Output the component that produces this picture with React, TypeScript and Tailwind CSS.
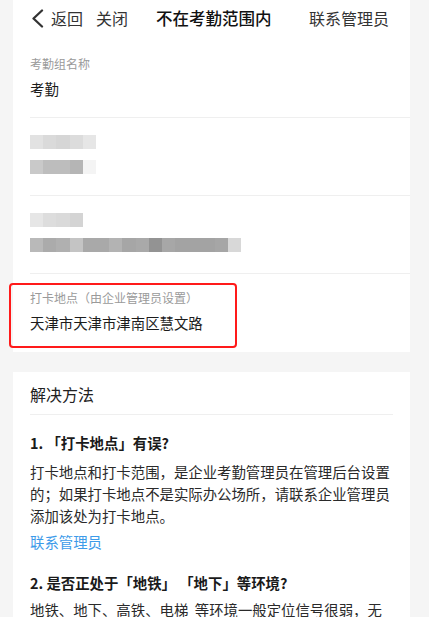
const FONT = { fontFamily: '"Noto Sans CJK SC", "Noto Sans", sans-serif' };

function Mosaic({ colors }: { colors: string[] }) {
	return (
		<div className="flex h-[14px]">
			{colors.map((c, i) => (
				<div key={i} className="h-full w-[13.2px]" style={{ backgroundColor: c }} />
			))}
		</div>
	);
}

function Item({
	label,
	children,
	last,
}: {
	label: React.ReactNode;
	children: React.ReactNode;
	last?: boolean;
}) {
	return (
		<div
			className={
				"pt-[15px] " +
				(last ? "pb-[19px]" : "pb-[18px] border-b border-[#efefef]")
			}
		>
			<div className="h-[18px] flex items-center text-[12px] text-[#9a9a9a]">{label}</div>
			<div className="mt-[6px] h-[20px] flex items-center text-[14.4px] text-[#1c1c1c]">
				{children}
			</div>
		</div>
	);
}

export default function App() {
	return (
		<div className="h-[617px] bg-[#f5f5f5] overflow-hidden" style={FONT}>
			<div className="ml-[13px] w-[397px]">
				<div className="bg-white relative">
					<header className="h-10 pb-1 pl-[18px] pr-[21px] flex items-center">
						<svg width="13" height="19" viewBox="0 0 13 19" className="shrink-0">
							<polyline
								points="11,1.5 2.5,9.5 11,17.5"
								fill="none"
								stroke="#333"
								strokeWidth="2.3"
								strokeLinecap="round"
								strokeLinejoin="round"
							/>
						</svg>
						<span className="ml-[7px] text-[16px] text-[#333]">返回</span>
						<span className="ml-[13px] text-[16px] text-[#333]">关闭</span>
						<span className="ml-[28px] text-[16.5px] font-medium text-[#111]">不在考勤范围内</span>
						<span className="ml-auto text-[16px] text-[#333]">联系管理员</span>
					</header>

					<div className="pl-[17px]">
						<Item label="考勤组名称">考勤</Item>
						<Item
							label={
								<Mosaic colors={["#e2e2e2", "#dadada", "#d6d6d6", "#dcdcdc", "#e6e6e6"]} />
							}
						>
							<Mosaic colors={["#c9c9c9", "#bdbdbd", "#bdbdbd", "#b5b5b5", "#f4f4f4"]} />
						</Item>
						<Item label={<Mosaic colors={["#e6e6e6", "#dddddd", "#dadada", "#d4d4d4"]} />}>
							<Mosaic
								colors={[
									"#b9b9b9",
									"#ababab",
									"#b0b0b0",
									"#c4c4c4",
									"#a9a9a9",
									"#a9a9a9",
									"#b3b3b3",
									"#a6a6a6",
									"#a9a9a9",
									"#939393",
									"#a7a7a7",
									"#a3a3a3",
									"#a3a3a3",
									"#a3a3a3",
									"#a6a6a6",
									"#d8d8d8",
								]}
							/>
						</Item>
						<Item label="打卡地点（由企业管理员设置）" last>
							天津市天津市津南区慧文路
						</Item>
					</div>

					<div className="absolute left-[-4px] top-[283px] w-[228px] h-[65px] border-[2.5px] border-[#ff1a1a] rounded-[4px]" />
				</div>

				<div className="mt-5 bg-white px-[17px]">
					<div className="pt-[11px] pb-[9px] border-b border-[#efefef] text-[16px] leading-[22px] text-[#222]">
						解决方法
					</div>
					<div className="pt-[17px] text-[14.4px] leading-[22px] text-[#2a2a2a]">
						<div className="font-bold text-[#1a1a1a]">1. 「打卡地点」有误?</div>
						<p className="mt-[7px]">
							打卡地点和打卡范围，是企业考勤管理员在管理后台设置的；如果打卡地点不是实际办公场所，请联系企业管理员添加该处为打卡地点。
						</p>
						<div className="mt-[4px] text-[#3d9be9]">联系管理员</div>
						<div className="mt-[19px] font-bold text-[#1a1a1a]">
							2. 是否正处于「地铁」 「地下」等环境?
						</div>
						<p className="mt-[5px]">
							地铁、地下、高铁、电梯&nbsp;&nbsp;等环境一般定位信号很弱，无
							<br />
							法准确获取定位，建议到信号较好的地方再尝试打卡。
						</p>
					</div>
				</div>
			</div>
		</div>
	);
}
